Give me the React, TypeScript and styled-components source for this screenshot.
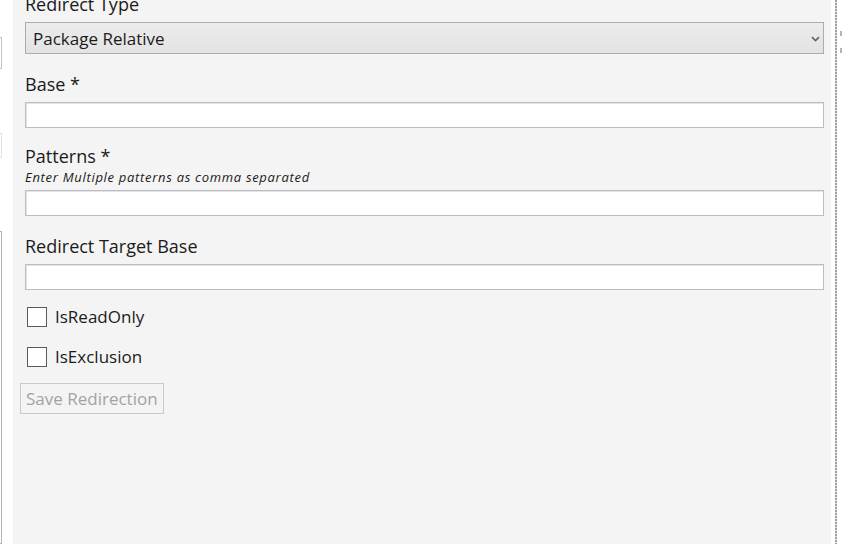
import React from 'react';
import styled, { createGlobalStyle } from 'styled-components';

const GlobalStyle = createGlobalStyle`
	html, body {
		margin: 0;
		padding: 0;
		background: #ffffff;
	}
	body {
		font-family: 'Open Sans', 'Noto Sans', sans-serif;
		color: #1b1b1b;
	}
`;

const Screen = styled.div`
	display: flex;
	width: 844px;
	height: 544px;
	overflow: hidden;
	background: #ffffff;
`;

const LeftStrip = styled.div`
	width: 13px;
	flex-shrink: 0;
	display: flex;
	flex-direction: column;
	overflow: hidden;
`;

interface StubProps {
	$top: number;
	$height?: number;
	$color: string;
}

const Stub = styled.div<StubProps>`
	margin-top: ${({ $top }) => $top}px;
	margin-left: -20px;
	width: 22px;
	height: ${({ $height }) => ($height ? `${$height}px` : 'auto')};
	flex: ${({ $height }) => ($height ? '0 0 auto' : '1')};
	border: 1px solid ${({ $color }) => $color};
	box-sizing: border-box;
`;

const Panel = styled.div`
	width: 818px;
	flex-shrink: 0;
	background: #f4f4f4;
	box-sizing: border-box;
	padding: 0 7px 0 12px;
	overflow: hidden;
`;

// the panel is scrolled a little, so the first label is cut at the top
const Form = styled.form`
	display: flex;
	flex-direction: column;
	margin-top: -8px;
`;

interface GapProps {
	$mt?: number;
}

const Label = styled.label<GapProps>`
	display: block;
	font-size: 18px;
	line-height: 24px;
	margin-top: ${({ $mt }) => $mt ?? 0}px;
`;

const Hint = styled.div`
	font-size: 13px;
	font-style: italic;
	letter-spacing: 0.7px;
	line-height: 15px;
	margin-top: 2px;
`;

const SelectBox = styled.div<GapProps>`
	position: relative;
	display: flex;
	align-items: center;
	height: 32px;
	margin-top: ${({ $mt }) => $mt ?? 0}px;
	padding: 0 7px;
	border: 1px solid #acacac;
	box-sizing: border-box;
	background: linear-gradient(#ececec, #e3e3e3);
	font-size: 17px;
`;

const Chevron = styled.svg`
	position: absolute;
	right: 2px;
	top: 12px;
`;

const TextInput = styled.input<GapProps>`
	display: block;
	height: 26px;
	margin: ${({ $mt }) => $mt ?? 0}px 0 0;
	padding: 0 4px;
	border: 1px solid #bcbcc4;
	box-shadow: inset 1px 1px 0 #e4e4e8;
	background: #ffffff;
	box-sizing: border-box;
	width: 100%;
	font: inherit;
	outline: none;
`;

const CheckRow = styled.label<GapProps>`
	display: flex;
	align-items: center;
	gap: 8px;
	margin: ${({ $mt }) => $mt ?? 0}px 0 0 2px;
	font-size: 17px;
	line-height: 20px;
`;

const Box = styled.span`
	width: 20px;
	height: 20px;
	flex-shrink: 0;
	border: 1.5px solid #5a5a5a;
	background: #ffffff;
	box-sizing: border-box;
`;

const SaveButton = styled.button`
	align-self: flex-start;
	margin: 16px 0 0 -5px;
	height: 31px;
	padding: 0 5px;
	border: 1px solid #c9c9c9;
	background: #f4f4f4;
	color: #a3a3a3;
	font-family: inherit;
	font-size: 17px;
`;

const Divider = styled.div`
	width: 2px;
	margin-left: 4px;
	flex-shrink: 0;
	background-image: repeating-linear-gradient(
		to bottom,
		#a0a0a0 0 2px,
		#e4e4e4 2px 3px
	);
`;

const RightStrip = styled.div`
	flex: 1;
	display: flex;
	flex-direction: column;
	gap: 12px;
	padding: 31px 0 0 3px;
`;

const Crumb = styled.span`
	width: 2px;
	height: 5px;
	background: #b5b5b5;
`;

const App: React.FC = () => {
	return (
		<>
			<GlobalStyle />
			<Screen>
				<LeftStrip>
					<Stub $top={37} $height={32} $color="#c4c4c4" />
					<Stub $top={64} $height={25} $color="#e2e2e2" />
					<Stub $top={73} $color="#b4b4b8" />
				</LeftStrip>
				<Panel>
					<Form>
						<Label>Redirect Type</Label>
						<SelectBox $mt={6}>
							Package Relative
							<Chevron width="11" height="8" viewBox="0 0 11 8">
								<path d="M2 2.2l3.5 3.3L9 2.2" fill="none" stroke="#666666" strokeWidth="1.7" />
							</Chevron>
						</SelectBox>
						<Label $mt={18}>Base *</Label>
						<TextInput $mt={6} />
						<Label $mt={16}>Patterns *</Label>
						<Hint>Enter Multiple patterns as comma separated</Hint>
						<TextInput $mt={5} />
						<Label $mt={18}>Redirect Target Base</Label>
						<TextInput $mt={6} />
						<CheckRow $mt={17}>
							<Box />
							IsReadOnly
						</CheckRow>
						<CheckRow $mt={20}>
							<Box />
							IsExclusion
						</CheckRow>
						<SaveButton type="button" disabled>
							Save Redirection
						</SaveButton>
					</Form>
				</Panel>
				<Divider />
				<RightStrip>
					<Crumb />
					<Crumb />
				</RightStrip>
			</Screen>
		</>
	);
};

export default App;
